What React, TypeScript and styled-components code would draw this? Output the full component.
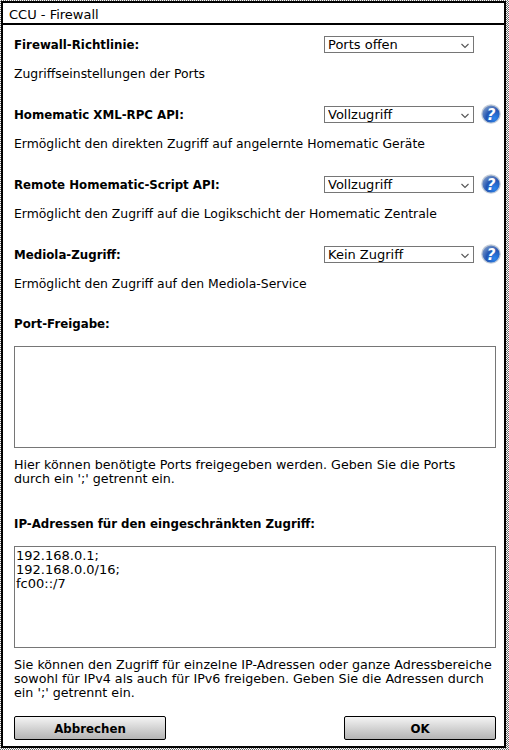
import styled, { createGlobalStyle } from 'styled-components'

const GlobalStyle = createGlobalStyle`
  html, body {
    margin: 0;
    padding: 0;
    background: #fff;
  }
  #root {
    width: 509px;
    height: 750px;
  }
`

const Screen = styled.div`
  width: 509px;
  height: 750px;
  padding: 1px 3px 2px 1px;
  box-sizing: border-box;
  background: repeating-conic-gradient(#6a6a6a 0 25%, #fff 0 50%) 0 0 / 2px 2px;
  font-family: 'DejaVu Sans', Verdana, sans-serif;
  font-size: 12.4px;
  color: #000;
`

const Dialog = styled.div`
  height: 100%;
  box-sizing: border-box;
  display: flex;
  flex-direction: column;
  background: #fff;
  border: 2px solid #000;
`

const TitleBar = styled.div`
  height: 20px;
  padding-left: 6px;
  font-size: 13px;
  line-height: 23px;
  border-bottom: 2px solid #000;
`

const Body = styled.div`
  flex: 1;
  padding: 9px 8px 0 11px;
  display: flex;
  flex-direction: column;
`

const Setting = styled.section`
  height: 70px;
`

const SettingRow = styled.div`
  display: flex;
  align-items: center;
  height: 20px;
`

const Label = styled.div`
  flex: none;
  width: 310px;
  padding-top: 1px;
  font-size: 11.8px;
  font-weight: 700;
  line-height: 18px;
`

const SelectBox = styled.div`
  position: relative;
  flex: none;
  width: 150px;
  height: 17px;
  margin-top: 1px;
`

const Select = styled.select`
  appearance: none;
  display: block;
  width: 100%;
  height: 100%;
  padding: 0 0 0 3px;
  box-sizing: border-box;
  border: 1px solid #767676;
  border-radius: 0;
  background: #fff;
  color: #000;
  font: 13px 'DejaVu Sans', Verdana, sans-serif;
`

const Chevron = styled.svg`
  position: absolute;
  top: 7px;
  right: 4px;
  pointer-events: none;
`

const HelpIcon = styled.svg`
  margin-left: 7px;
  flex: none;
`

const Description = styled.p`
  margin: 13px 0 0;
  line-height: 14px;
`

const FieldTitle = styled.div<{ $gap: number }>`
  margin-top: ${({ $gap }) => $gap}px;
  font-size: 11.8px;
  font-weight: 700;
  line-height: 14px;
`

const TextBox = styled.textarea`
  display: block;
  width: 482px;
  height: 102px;
  margin-top: 15px;
  padding: 2px 1px;
  box-sizing: border-box;
  border: 1px solid #767676;
  border-radius: 0;
  outline: none;
  resize: none;
  overflow: hidden;
  color: #000;
  font: 13px/14px 'DejaVu Sans', Verdana, sans-serif;
`

const Hint = styled.p`
  margin: 10px 0 0;
  font-size: 12.7px;
  line-height: 14px;
`

const Footer = styled.div`
  display: flex;
  justify-content: space-between;
  width: 482px;
  margin-top: 16px;
`

const Button = styled.button`
  width: 152px;
  height: 24px;
  padding: 1px 0 0;
  box-sizing: border-box;
  border: 1px solid #000;
  border-radius: 2px;
  background: linear-gradient(#f4f4f4, #b4b4b4);
  color: #000;
  font: 700 11.8px 'DejaVu Sans', Verdana, sans-serif;
`

const Help = () => (
  <HelpIcon width="20" height="20" viewBox="0 0 20 20">
    <defs>
      <radialGradient id="ball" cx="0.7" cy="0.75" r="0.85">
        <stop offset="0" stopColor="#2c86ee" />
        <stop offset="0.55" stopColor="#2256b4" />
        <stop offset="1" stopColor="#7f9ac6" />
      </radialGradient>
    </defs>
    <circle cx="10" cy="10" r="9.8" fill="#c3ccd8" />
    <circle cx="10" cy="10" r="8.6" fill="url(#ball)" />
    <text
      x="10"
      y="15.5"
      textAnchor="middle"
      fill="#fff"
      fontFamily="'DejaVu Sans', sans-serif"
      fontSize="15"
      fontWeight="700"
      fontStyle="italic">
      ?
    </text>
  </HelpIcon>
)

type RowProps = {
  label: string
  value: string
  options: string[]
  description: string
  help?: boolean
}

const SettingBlock = ({ label, value, options, description, help }: RowProps) => (
  <Setting>
    <SettingRow>
      <Label>{label}</Label>
      <SelectBox>
        <Select defaultValue={value}>
          {options.map(o => (
            <option key={o}>{o}</option>
          ))}
        </Select>
        <Chevron width="10" height="6" viewBox="0 0 10 6">
          <path d="M1.5 1l3.5 3.5L8.5 1" fill="none" stroke="#555" strokeWidth="1.1" />
        </Chevron>
      </SelectBox>
      {help && <Help />}
    </SettingRow>
    <Description>{description}</Description>
  </Setting>
)

const access = ['Vollzugriff', 'Eingeschränkt', 'Kein Zugriff']

export default function App() {
  return (
    <>
      <GlobalStyle />
      <Screen>
        <Dialog>
          <TitleBar>CCU - Firewall</TitleBar>
          <Body>
            <SettingBlock
              label="Firewall-Richtlinie:"
              value="Ports offen"
              options={['Ports offen', 'Ports gesperrt']}
              description="Zugriffseinstellungen der Ports"
            />
            <SettingBlock
              help
              label="Homematic XML-RPC API:"
              value="Vollzugriff"
              options={access}
              description="Ermöglicht den direkten Zugriff auf angelernte Homematic Geräte"
            />
            <SettingBlock
              help
              label="Remote Homematic-Script API:"
              value="Vollzugriff"
              options={access}
              description="Ermöglicht den Zugriff auf die Logikschicht der Homematic Zentrale"
            />
            <SettingBlock
              help
              label="Mediola-Zugriff:"
              value="Kein Zugriff"
              options={access}
              description="Ermöglicht den Zugriff auf den Mediola-Service"
            />
            <FieldTitle $gap={3}>Port-Freigabe:</FieldTitle>
            <TextBox defaultValue="" />
            <Hint>
              Hier können benötigte Ports freigegeben werden. Geben Sie die Ports
              <br />
              durch ein ';' getrennt ein.
            </Hint>
            <FieldTitle $gap={31}>IP-Adressen für den eingeschränkten Zugriff:</FieldTitle>
            <TextBox defaultValue={'192.168.0.1;\n192.168.0.0/16;\nfc00::/7'} />
            <Hint>
              Sie können den Zugriff für einzelne IP-Adressen oder ganze Adressbereiche
              <br />
              sowohl für IPv4 als auch für IPv6 freigeben. Geben Sie die Adressen durch
              <br />
              ein ';' getrennt ein.
            </Hint>
            <Footer>
              <Button>Abbrechen</Button>
              <Button>OK</Button>
            </Footer>
          </Body>
        </Dialog>
      </Screen>
    </>
  )
}
